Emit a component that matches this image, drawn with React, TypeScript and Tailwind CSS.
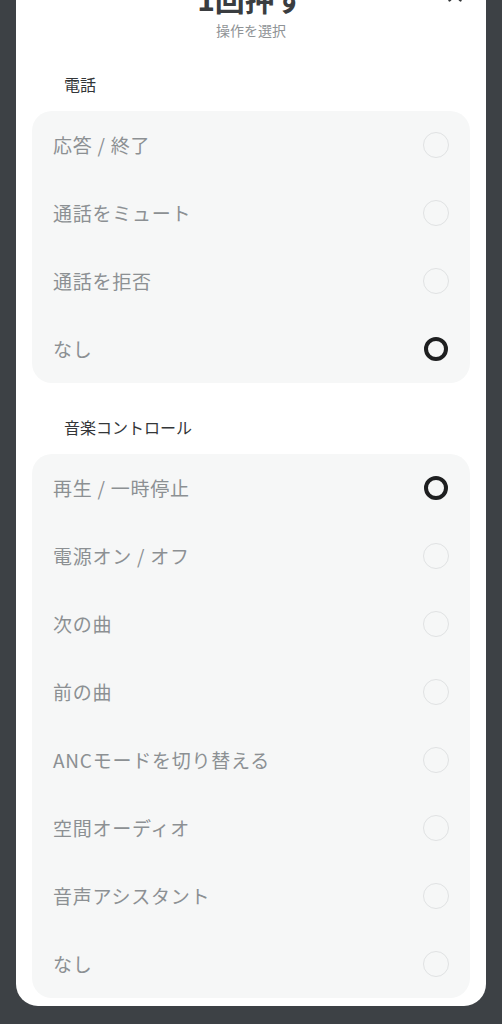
import { X } from "lucide-react"

const callActions = ["応答 / 終了", "通話をミュート", "通話を拒否", "なし"]
const musicActions = [
  "再生 / 一時停止",
  "電源オン / オフ",
  "次の曲",
  "前の曲",
  "ANCモードを切り替える",
  "空間オーディオ",
  "音声アシスタント",
  "なし",
]

function Radio({ checked }: { checked: boolean }) {
  return checked ? (
    <span className="block h-[24px] w-[24px] rounded-full border-[4px] border-[#1e1f20]" />
  ) : (
    <span className="block h-[26px] w-[26px] rounded-full border border-[#e0e2e3]" />
  )
}

function Group({ title, items, selected }: { title: string; items: string[]; selected: number }) {
  return (
    <div>
      <div className="pl-[32px] pt-[32px] pb-[15px] text-[16px] leading-[24px] text-[#333638]">{title}</div>
      <div className="rounded-[20px] bg-[#f6f7f7] px-[21px]">
        {items.map((item, i) => (
          <div key={i} className="flex h-[68px] items-center justify-between">
            <span className="text-[19px] tracking-[0.04em] text-[#8c9093]">{item}</span>
            <div className="flex h-[26px] w-[26px] items-center justify-center">
              <Radio checked={i === selected} />
            </div>
          </div>
        ))}
      </div>
    </div>
  )
}

export default function App() {
  return (
    <div
      className="h-[1024px] overflow-hidden bg-[#3d4145] px-[16px]"
      style={{ fontFamily: '"Noto Sans CJK JP", "Noto Sans", sans-serif' }}
    >
      {/* the sheet is scrolled: its header sits partly above the top edge */}
      <div className="relative mt-[-20px] rounded-b-[22px] bg-white px-[16px] pt-[1px] pb-[8px]">
        <button className="absolute right-[20px] top-[4px] text-[#333638]">
          <X className="h-[22px] w-[22px]" strokeWidth={2.5} />
        </button>
        <h1 className="mt-[-1px] text-center text-[30px] font-bold leading-[36px] text-[#3a3d40]">1回押す</h1>
        <p className="mt-[4px] text-center text-[14px] leading-[20px] text-[#8f9396]">操作を選択</p>
        <Group title="電話" items={callActions} selected={3} />
        <Group title="音楽コントロール" items={musicActions} selected={0} />
      </div>
    </div>
  )
}
